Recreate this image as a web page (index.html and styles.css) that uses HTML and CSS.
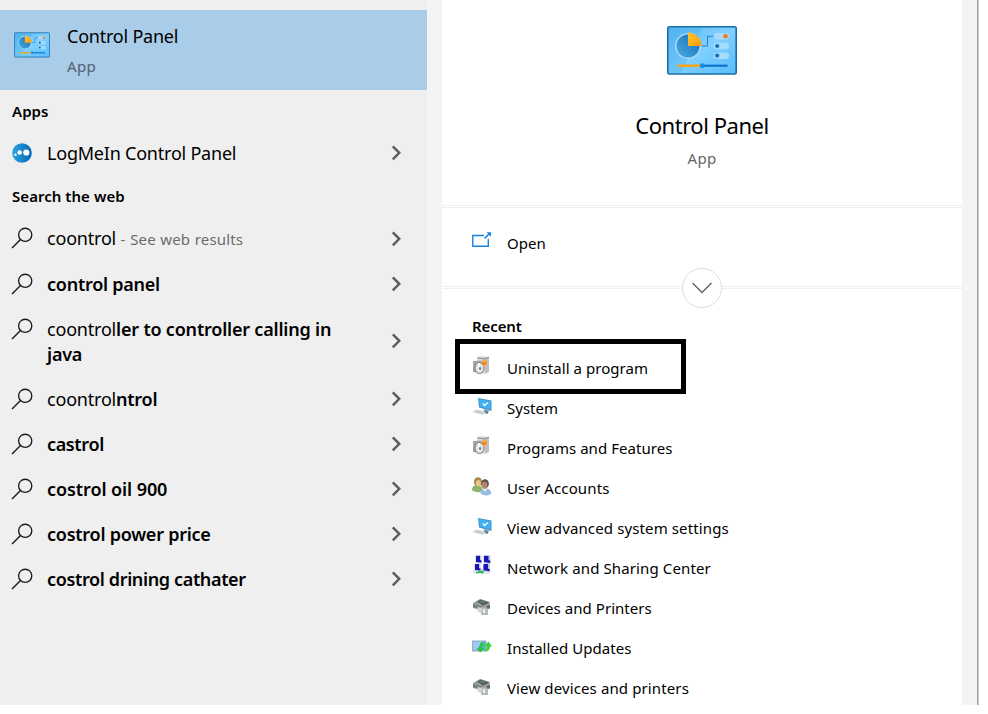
FILE: index.html
```html
<!DOCTYPE html>
<html lang="en">
<head>
<meta charset="utf-8">
<title>Search</title>
<link rel="stylesheet" href="styles.css">
</head>
<body>
<svg class="defs" width="0" height="0">
  <defs>
    <linearGradient id="screen" x1="0" y1="0" x2="1" y2="1"><stop offset="0" stop-color="#5cb9f5"/><stop offset=".5" stop-color="#80d0ff"/><stop offset="1" stop-color="#58bdfb"/></linearGradient>
    <linearGradient id="disc" x1="0" y1="1" x2="1" y2="0"><stop offset="0" stop-color="#4bb1e8"/><stop offset="1" stop-color="#1268b0"/></linearGradient>
    <linearGradient id="gold" x1="0" y1="0" x2="1" y2="1"><stop offset="0" stop-color="#ffc52f"/><stop offset="1" stop-color="#ff9b0c"/></linearGradient>
    <linearGradient id="globe" x1="0" y1="0" x2="1" y2="0"><stop offset="0" stop-color="#27a8df"/><stop offset="1" stop-color="#0864b5"/></linearGradient>
  </defs>
  <symbol id="panel" viewBox="0 0 70 49">
    <rect x=".8" y=".8" width="68.4" height="47.2" rx="1.5" fill="url(#screen)" stroke="#176da8" stroke-width="1.6"/>
    <path d="M2 2H35L14 47H2z" fill="#2b9de0" opacity=".22"/>
    <circle cx="21" cy="20" r="12.2" fill="url(#disc)" stroke="#b9dff5" stroke-width="1.3"/>
    <path d="M21 20V6.500A13.500 13.500 0 0 1 34.500 20z" fill="url(#gold)"/>
    <path d="M35 20h5.500V10.300H47" fill="none" stroke="#2585c5" stroke-width="1.100"/>
    <g fill="#a5dcfb"><rect x="46.500" y="7" width="15.500" height="6.500" rx="3.200"/><rect x="46.500" y="16.700" width="15.500" height="6.500" rx="3.200"/><rect x="46.500" y="26.400" width="15.500" height="6.500" rx="3.200"/></g>
    <circle cx="58.500" cy="10.200" r="2.300" fill="#f47b10"/><circle cx="50.200" cy="20" r="2.100" fill="#176fb5"/><circle cx="50.200" cy="29.600" r="2.100" fill="#176fb5"/>
    <path d="M10.500 39.700H34" stroke="#f8a41b" stroke-width="2.500"/><path d="M36 39.700H60.500" stroke="#0870c9" stroke-width="2.100"/>
    <circle cx="35.300" cy="39.700" r="2.400" fill="#118ee8"/>
  </symbol>
  <symbol id="magnifier" viewBox="0 0 22 22"><g fill="none" stroke="#1b1b1b" stroke-width="1.350"><circle cx="14.200" cy="7.800" r="6.600"/><path d="M9.500 12.500 1 21"/></g></symbol>
  <symbol id="next" viewBox="0 0 10 16"><path d="M1.800 1.300 8.300 7.800l-6.500 6.500" fill="none" stroke="#5d5d5d" stroke-width="2.500"/></symbol>
  <symbol id="programs" viewBox="0 0 20 20">
    <path d="M5 3 8 .8 17 2v15l-4 2-8-2z" fill="#dedfdf"/><path d="m5 3 8 1.500V19l4-2V2z" fill="#c0c1bf"/><path d="m5 2.900 8 1.200 4-2" fill="none" stroke="#898c8a"/>
    <path d="m1 6 10-.5V18L1 17z" fill="#a5a9ab"/><ellipse cx="7.500" cy="13" rx="4.600" ry="5.500" fill="#dde5e8" stroke="#73797c"/><path d="M7 8v8" stroke="#fff" stroke-width="2"/><ellipse cx="8" cy="13.500" rx="1.200" ry="1.600" fill="#7d8588"/>
    <circle cx="12.500" cy="8" r="3" fill="#f6a64a"/><path d="m10 9 4-1" stroke="#db7426" stroke-width="1.500"/>
  </symbol>
  <symbol id="system" viewBox="0 0 20 20">
    <path d="M6 1 19.500 3.500V14L7 10.500z" fill="#4793c6"/><path d="m7 2 11.500 2.500V12.500L8 9.500z" fill="#42b1f2"/><path d="m11 6.500 1.700 2 3-3" fill="none" stroke="#e6faff" stroke-width="1.500"/>
    <path d="m12 12.500 5 1.200-1.500 3.300-4-1z" fill="#637f91"/><path d="m0 14.500 5-2 9 2.500-4 3z" fill="#d6dde1"/><path d="m2 14.700 9 1.800M4.500 13.700l8 2" stroke="#aeb9c0" stroke-width=".6"/>
  </symbol>
  <symbol id="users" viewBox="0 0 20 20">
    <path d="M0 13.500q0-5.500 5-5.500t6 6q-5 2.500-11-.5" fill="#8cb46c"/><ellipse cx="6" cy="4.800" rx="4" ry="4.500" fill="#a98546"/><ellipse cx="6.400" cy="6.300" rx="2.500" ry="3.200" fill="#e5c792"/>
    <path d="M8.500 16.500q0-5 5-5t6 5q-5 4-11 0" fill="#94bce0"/><ellipse cx="13" cy="6.800" rx="3.900" ry="4.600" fill="#5f5049"/><ellipse cx="12.500" cy="8.300" rx="2.800" ry="3.500" fill="#b48668"/><path d="m11 12 2 3 2-3" fill="#f2f6fa"/>
  </symbol>
  <symbol id="network" viewBox="0 0 20 20">
    <path d="m1 15 7-2 11 2-2 4-16-1z" fill="#dfe5e2"/>
    <g fill="#c5cae4"><path d="m3.500 1 6-.5v8l-6-.5zm8 0 7-.5v8.500l-7-.5zm-9 8 6-.5v7.500l-6-.5zm8.500.5 7-.5v8l-7-.5z"/></g>
    <g fill="#1716b5"><path d="M4 .8h4V5l1.500.5V7.500L4 7zM12 .8h4.500V5l1.700.7V8L12 7zM3 9h4v4l1.500.7v1.800L3 15zM11.500 9H16v4.500l1.700.7v2l-6.200-1z"/></g><path d="M4 17q4-1.500 8-1.500l-1 3.500-2-1-5 .5z" fill="#27ba60"/>
  </symbol>
  <symbol id="printer" viewBox="0 0 20 20">
    <path d="m1 5 7-4 10 3-1 7-5 2L1 10z" fill="#969b9b"/><path d="m5 3.500 4-2 8 3-6 3z" fill="#525c5c"/><path d="m7 3.500 3-1 4 1.600-3 1.200z" fill="#62857d"/>
    <path d="m1 6 10 3v3L1 9z" fill="#777d7e"/><path d="m5.500 9 5.500 1v6l-5-2z" fill="#d2d7d8"/><path d="m10 9 6 1v7H9z" fill="#b5bbbc"/><path d="m11 11 2 .3V15h-2" fill="#eef1f2"/><path d="m15 8 3-1v3.500h-3z" fill="#626667"/>
  </symbol>
  <symbol id="updates" viewBox="0 0 20 20">
    <path d="M0 2.500h14.500v11H0z" fill="#9badb8"/><path d="M1 3.500h12.500V12H1z" fill="#66a9dc"/><path d="M1 3.500h10L4 12H1z" fill="#9acbed"/>
    <path d="M8.500 4.500H12l-2 6h3l-5 4-3-4h2z" fill="#22c939"/><path d="m16.500 3.500 3.500 5h-2q0 4-4.500 5.500L15 8.500h-3z" fill="#34d52f"/>
  </symbol>
</svg>
<div class="window">
  <aside class="results">
    <div class="best">
      <svg class="best-icon"><use href="#panel"/></svg>
      <div><div class="best-name">Control Panel</div><div class="best-kind">App</div></div>
    </div>
    <h2>Apps</h2>
    <div class="row"><svg class="globe" viewBox="0 0 20 20"><circle cx="10" cy="10" r="9.800" fill="url(#globe)"/><g fill="#fff"><circle cx="3.500" cy="11.800" r="1.200"/><circle cx="7.700" cy="9.500" r="2.300"/><circle cx="14.300" cy="9.500" r="3.100"/></g></svg><p class="app-name">LogMeIn Control Panel</p><svg class="next"><use href="#next"/></svg></div>
    <h2 class="web">Search the web</h2>
    <div class="row first"><svg class="lens"><use href="#magnifier"/></svg><p>coontrol<small> - See web results</small></p><svg class="next"><use href="#next"/></svg></div>
    <div class="row"><svg class="lens"><use href="#magnifier"/></svg><p><b>control panel</b></p><svg class="next"><use href="#next"/></svg></div>
    <div class="row tall"><svg class="lens"><use href="#magnifier"/></svg><p>coontrol<b class="even">ler to controller calling in<br>java</b></p><svg class="next"><use href="#next"/></svg></div>
    <div class="row"><svg class="lens"><use href="#magnifier"/></svg><p>coontrol<b>ntrol</b></p><svg class="next"><use href="#next"/></svg></div>
    <div class="row"><svg class="lens"><use href="#magnifier"/></svg><p><b class="tight">castrol</b></p><svg class="next"><use href="#next"/></svg></div>
    <div class="row"><svg class="lens"><use href="#magnifier"/></svg><p><b class="wide">costrol oil 900</b></p><svg class="next"><use href="#next"/></svg></div>
    <div class="row"><svg class="lens"><use href="#magnifier"/></svg><p><b>costrol power price</b></p><svg class="next"><use href="#next"/></svg></div>
    <div class="row"><svg class="lens"><use href="#magnifier"/></svg><p><b class="tight">costrol drining cathater</b></p><svg class="next"><use href="#next"/></svg></div>
  </aside>
  <div class="preview">
    <main>
      <section class="hero"><svg class="hero-icon"><use href="#panel"/></svg><h1>Control Panel</h1><div class="hero-kind">App</div></section>
      <section class="open">
        <svg class="open-icon" viewBox="0 0 20 16"><path d="M12 3.500H.8v10.700h15.500V7" fill="none" stroke="#1782db" stroke-width="1.400"/><path d="m12.500 6.500 5-5" stroke="#1782db" stroke-width="1.600"/><path d="M14.500.3H19v4.500z" fill="#1782db"/></svg><span>Open</span>
        <div class="expand"><svg viewBox="0 0 20 12"><path d="m.5 1 9.500 9.500L19.500 1" fill="none" stroke="#666" stroke-width="1.500"/></svg></div>
      </section>
      <section class="recent">
        <h3>Recent</h3>
        <div class="item marked"><svg><use href="#programs"/></svg><span>Uninstall a program</span></div>
        <div class="item"><svg class="low"><use href="#system"/></svg><span class="snug">System</span></div>
        <div class="item"><svg class="high"><use href="#programs"/></svg><span>Programs and Features</span></div>
        <div class="item"><svg class="low"><use href="#users"/></svg><span class="loose">User Accounts</span></div>
        <div class="item"><svg class="low"><use href="#system"/></svg><span class="loose">View advanced system settings</span></div>
        <div class="item"><svg class="high"><use href="#network"/></svg><span class="loose">Network and Sharing Center</span></div>
        <div class="item"><svg class="lower"><use href="#printer"/></svg><span>Devices and Printers</span></div>
        <div class="item"><svg class="lower"><use href="#updates"/></svg><span>Installed Updates</span></div>
        <div class="item"><svg class="lower"><use href="#printer"/></svg><span class="loose">View devices and printers</span></div>
      </section>
    </main>
  </div>
</div>
</body>
</html>
```
FILE: styles.css
```css
* { box-sizing: border-box; }
body { margin: 0; background: #fff; color: #000; font-family: "Noto Sans", "Open Sans", sans-serif; overflow: hidden; }
h1, h2, h3, p { margin: 0; }
svg { display: block; flex: none; }
.defs { position: absolute; }
.window { display: flex; width: 979px; height: 705px; overflow: hidden; }
.results { width: 427px; padding-top: 10px; background: #efefef; }
.best { display: flex; height: 80px; padding: 0 14px; background: #a9cce9; }
.best > div { margin-left: 17px; }
.best-icon { width: 36px; height: 26px; margin-top: 22px; }
.best-name { margin-top: 12px; font-size: 18px; line-height: 28px; letter-spacing: -.22px; }
.best-kind { margin-top: 2px; font-size: 15px; line-height: 28px; letter-spacing: .4px; color: #53616c; }
h2, h3 { font-weight: 600; font-size: 15px; }
h2 { height: 41px; padding-left: 12px; line-height: 43px; letter-spacing: .05px; }
.web { line-height: 41px; }
.row { display: flex; align-items: center; height: 45px; padding: 0 26px 0 11px; }
.row p { flex: 1; font-size: 18px; line-height: 25px; letter-spacing: -.2px; white-space: nowrap; }
.row .app-name { letter-spacing: -.22px; }
.row b { font-weight: 600; letter-spacing: -.25px; }
.row .tight { letter-spacing: -.36px; }
.row .even { letter-spacing: -.2px; }
.row .wide { letter-spacing: -.08px; }
.row small { font-size: 15px; letter-spacing: .15px; word-spacing: .5px; color: #6b6b6b; }
.first p { margin-top: -2px; }
.lens { width: 22px; height: 22px; margin: -2px 14px 0 0; }
.first .lens { margin-top: -3px; }
.tall { height: 70px; }
.tall .lens { align-self: flex-start; margin-top: 11px; }
.globe { width: 20px; height: 20px; margin: -1px 15px 0 1px; }
.next { width: 10px; height: 16px; margin-top: -2px; }
.preview { width: 552px; padding: 0 16px 0 15px; background: #f4f4f4; border-right: 1px solid #c9c9c9; box-shadow: inset -1px 0 #a2a2a2; }
main { height: 705px; background: #fff; }
.hero { height: 208px; display: flex; flex-direction: column; align-items: center; padding-top: 26px; border-bottom: 3px double #efefef; }
.hero-icon { width: 70px; height: 49px; }
h1 { margin-top: 32px; font-size: 22px; line-height: 36px; font-weight: 400; letter-spacing: -.45px; }
.hero-kind { margin-top: 2px; font-size: 15px; line-height: 26px; letter-spacing: .3px; color: #666; }
.open { position: relative; display: flex; height: 81px; padding: 22px 30px 0; border-bottom: 3px double #efefef; font-size: 15px; line-height: 26px; }
.open-icon { width: 20px; height: 16px; margin: 2px 15px 0 0; }
.expand { position: absolute; left: 240px; top: 60px; width: 40px; height: 40px; border: 1px solid #dedede; border-radius: 50%; background: #fff; padding: 13px 9px; }
.expand svg { width: 20px; height: 12px; }
.recent { padding: 24px 13px 0; }
h3 { padding-left: 17px; line-height: 26px; height: 26px; letter-spacing: -.1px; }
.item { display: flex; height: 40px; padding: 7px 17px; font-size: 15px; line-height: 26px; letter-spacing: .05px; white-space: nowrap; }
.item svg { width: 20px; height: 20px; margin: 1px 15px 0 0; }
.item .high { margin-top: 0; }
.item .low { margin-top: 2px; }
.item .lower { margin-top: 3px; }
.snug { letter-spacing: 0; }
.loose { letter-spacing: .12px; }
.marked { width: 231px; height: 55px; border: 5px solid #000; padding: 11px 12px; margin-bottom: -6px; }
.marked svg { margin-top: 0; }
```
